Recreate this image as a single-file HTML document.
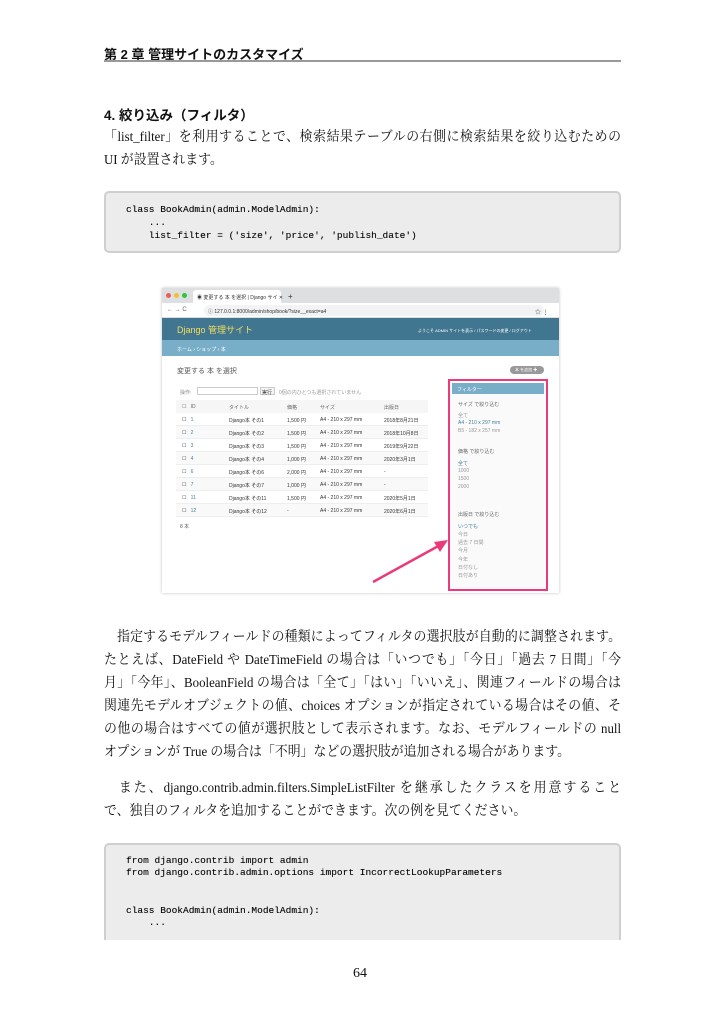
<!DOCTYPE html>
<html><head><meta charset="utf-8"><style>
*{margin:0;padding:0;box-sizing:border-box}
body{width:725px;height:1024px;background:#fff;position:relative;overflow:hidden;font-family:"Liberation Serif","Noto Serif CJK SC",serif;color:#111}
.a{position:absolute;white-space:nowrap}
.p{font-size:14px;left:104px;width:562px;transform:scaleX(0.92);transform-origin:0 0}
.j{text-align:justify;text-align-last:justify;white-space:normal}
.g{font-family:"Liberation Sans","Noto Sans CJK JP",sans-serif}
.code{position:absolute;left:104px;width:517px;background:#ececec;border:2px solid #cfcfcf;border-radius:5px}
.m{font-family:"Liberation Mono",monospace;font-size:9.5px;position:absolute;left:126px;white-space:pre;color:#000;-webkit-text-stroke:0.1px #000}
.s{font-family:"Liberation Sans","Noto Sans CJK JP",sans-serif;position:absolute;white-space:nowrap;font-size:5px;color:#333}
.row{position:absolute;left:176px;width:252px;height:13px;border-bottom:1px solid #eee}
</style></head><body>
<div class="a g" style="left:104px;top:44px;font-size:13px;font-weight:bold">第 2 章 管理サイトのカスタマイズ</div>
<div class="a" style="left:104px;top:60px;width:517px;height:2px;background:#999"></div>
<div class="a g" style="left:104px;top:104px;font-size:13.5px;font-weight:bold">4. 絞り込み（フィルタ）</div>
<div class="a p j" style="top:126px">「list_filter」を利用することで、検索結果テーブルの右側に検索結果を絞り込むための</div>
<div class="a p" style="top:149px">UI が設置されます。</div>
<div class="code" style="top:191px;height:62px"></div>
<div class="m" style="top:204px">class BookAdmin(admin.ModelAdmin):</div>
<div class="m" style="top:217px">    ...</div>
<div class="m" style="top:230px">    list_filter = ('size', 'price', 'publish_date')</div>

<!-- screenshot -->
<div class="a" style="left:162px;top:288px;width:397px;height:305px;background:#fff;box-shadow:0 0 3px rgba(0,0,0,.25)"></div>
<div class="a" style="left:162px;top:288px;width:397px;height:15px;background:#dedfe1"></div>
<div class="a" style="left:166px;top:293px;width:5px;height:5px;border-radius:50%;background:#ec5f57"></div>
<div class="a" style="left:174px;top:293px;width:5px;height:5px;border-radius:50%;background:#f5bd30"></div>
<div class="a" style="left:182px;top:293px;width:5px;height:5px;border-radius:50%;background:#2cc641"></div>
<div class="a" style="left:193px;top:290px;width:88px;height:13px;background:#fff;border-radius:3px 3px 0 0"></div>
<div class="s" style="left:197px;top:294px">◉ 変更する 本 を選択 | Django サイ ✕</div>
<div class="s" style="left:288px;top:292px;font-size:8px">+</div>
<div class="a" style="left:162px;top:303px;width:397px;height:15px;background:#fff;border-bottom:1px solid #ddd"></div>
<div class="a" style="left:204px;top:305px;width:340px;height:11px;background:#f1f3f4;border-radius:6px"></div>
<div class="s" style="left:167px;top:307px;font-size:6px;color:#666">← → C</div>
<div class="s" style="left:208px;top:308px">ⓘ 127.0.0.1:8000/admin/shop/book/?size__exact=a4</div>
<div class="s" style="left:535px;top:307px;font-size:6px">☆ ⋮</div>
<div class="a" style="left:162px;top:318px;width:397px;height:22px;background:#417690"></div>
<div class="s" style="left:177px;top:323px;font-size:9px;color:#f5dd5d">Django 管理サイト</div>
<div class="s" style="left:418px;top:328px;font-size:4px;color:#fff">ようこそ ADMIN サイトを表示 / パスワードの変更 / ログアウト</div>
<div class="a" style="left:162px;top:340px;width:397px;height:16px;background:#79aec8"></div>
<div class="s" style="left:177px;top:346px;color:#fff">ホーム › ショップ › 本</div>
<div class="s" style="left:177px;top:366px;font-size:7px;color:#555">変更する 本 を選択</div>
<div class="a" style="left:510px;top:366px;width:34px;height:8px;background:#999;border-radius:4px"></div>
<div class="s" style="left:515px;top:367px;font-size:4px;color:#fff">本 を追加 ✚</div>
<div class="s" style="left:180px;top:389px;color:#888">操作:</div>
<div class="a" style="left:197px;top:387px;width:61px;height:8px;border:1px solid #ccc;background:#fff"></div>
<div class="a" style="left:260px;top:387px;width:15px;height:8px;border:1px solid #ccc;background:#f4f4f4"></div>
<div class="s" style="left:262px;top:389px">実行</div>
<div class="s" style="left:279px;top:389px;color:#999">0個の内ひとつも選択されていません</div>
<div class="a" style="left:176px;top:400px;width:252px;height:13px;background:#f6f6f6"></div>
<div class="s" style="left:182px;top:404px;color:#666">☐ &nbsp;&nbsp;ID</div>
<div class="s" style="left:229px;top:404px;color:#666">タイトル</div>
<div class="s" style="left:287px;top:404px;color:#666">価格</div>
<div class="s" style="left:320px;top:404px;color:#666">サイズ</div>
<div class="s" style="left:384px;top:404px;color:#666">出版日</div>
<div class="row" style="top:413px"></div><div class="s" style="left:182px;top:417px">☐ &nbsp;&nbsp;<span style="color:#447e9b">1</span></div><div class="s" style="left:229px;top:417px">Django本 その1</div><div class="s" style="left:287px;top:417px">1,500 円</div><div class="s" style="left:320px;top:417px">A4 - 210 x 297 mm</div><div class="s" style="left:384px;top:417px">2018年8月21日</div>
<div class="row" style="top:426px;background:#f9f9f9"></div><div class="s" style="left:182px;top:430px">☐ &nbsp;&nbsp;<span style="color:#447e9b">2</span></div><div class="s" style="left:229px;top:430px">Django本 その2</div><div class="s" style="left:287px;top:430px">1,500 円</div><div class="s" style="left:320px;top:430px">A4 - 210 x 297 mm</div><div class="s" style="left:384px;top:430px">2018年10月8日</div>
<div class="row" style="top:439px"></div><div class="s" style="left:182px;top:443px">☐ &nbsp;&nbsp;<span style="color:#447e9b">3</span></div><div class="s" style="left:229px;top:443px">Django本 その3</div><div class="s" style="left:287px;top:443px">1,500 円</div><div class="s" style="left:320px;top:443px">A4 - 210 x 297 mm</div><div class="s" style="left:384px;top:443px">2019年9月22日</div>
<div class="row" style="top:452px;background:#f9f9f9"></div><div class="s" style="left:182px;top:456px">☐ &nbsp;&nbsp;<span style="color:#447e9b">4</span></div><div class="s" style="left:229px;top:456px">Django本 その4</div><div class="s" style="left:287px;top:456px">1,000 円</div><div class="s" style="left:320px;top:456px">A4 - 210 x 297 mm</div><div class="s" style="left:384px;top:456px">2020年3月1日</div>
<div class="row" style="top:465px"></div><div class="s" style="left:182px;top:469px">☐ &nbsp;&nbsp;<span style="color:#447e9b">6</span></div><div class="s" style="left:229px;top:469px">Django本 その6</div><div class="s" style="left:287px;top:469px">2,000 円</div><div class="s" style="left:320px;top:469px">A4 - 210 x 297 mm</div><div class="s" style="left:384px;top:469px">-</div>
<div class="row" style="top:478px;background:#f9f9f9"></div><div class="s" style="left:182px;top:482px">☐ &nbsp;&nbsp;<span style="color:#447e9b">7</span></div><div class="s" style="left:229px;top:482px">Django本 その7</div><div class="s" style="left:287px;top:482px">1,000 円</div><div class="s" style="left:320px;top:482px">A4 - 210 x 297 mm</div><div class="s" style="left:384px;top:482px">-</div>
<div class="row" style="top:491px"></div><div class="s" style="left:182px;top:495px">☐ &nbsp;&nbsp;<span style="color:#447e9b">11</span></div><div class="s" style="left:229px;top:495px">Django本 その11</div><div class="s" style="left:287px;top:495px">1,500 円</div><div class="s" style="left:320px;top:495px">A4 - 210 x 297 mm</div><div class="s" style="left:384px;top:495px">2020年5月1日</div>
<div class="row" style="top:504px;background:#f9f9f9"></div><div class="s" style="left:182px;top:508px">☐ &nbsp;&nbsp;<span style="color:#447e9b">12</span></div><div class="s" style="left:229px;top:508px">Django本 その12</div><div class="s" style="left:287px;top:508px">-</div><div class="s" style="left:320px;top:508px">A4 - 210 x 297 mm</div><div class="s" style="left:384px;top:508px">2020年6月1日</div>
<div class="s" style="left:180px;top:523px;color:#666">8 本</div>
<div class="a" style="left:448px;top:379px;width:100px;height:212px;border:2px solid #ea3a7a;background:#fafafa"></div>
<div class="a" style="left:452px;top:383px;width:92px;height:11px;background:#79aec8"></div>
<div class="s" style="left:457px;top:386px;color:#fff">フィルター</div>
<div class="s" style="left:458px;top:401px;color:#666">サイズ で絞り込む</div>
<div class="s" style="left:458px;top:412px;color:#999">全て</div>
<div class="s" style="left:458px;top:420px;color:#447e9b">A4 - 210 x 297 mm</div>
<div class="s" style="left:458px;top:428px;color:#999">B5 - 182 x 257 mm</div>
<div class="s" style="left:458px;top:448px;color:#666">価格 で絞り込む</div>
<div class="s" style="left:458px;top:460px;color:#447e9b">全て</div>
<div class="s" style="left:458px;top:468px;color:#999">1000</div>
<div class="s" style="left:458px;top:476px;color:#999">1500</div>
<div class="s" style="left:458px;top:484px;color:#999">2000</div>
<div class="s" style="left:458px;top:511px;color:#666">出版日 で絞り込む</div>
<div class="s" style="left:458px;top:523px;color:#447e9b">いつでも</div>
<div class="s" style="left:458px;top:531px;color:#999">今日</div>
<div class="s" style="left:458px;top:539px;color:#999">過去 7 日間</div>
<div class="s" style="left:458px;top:547px;color:#999">今月</div>
<div class="s" style="left:458px;top:556px;color:#999">今年</div>
<div class="s" style="left:458px;top:564px;color:#999">日付なし</div>
<div class="s" style="left:458px;top:572px;color:#999">日付あり</div>
<svg class="a" style="left:360px;top:530px" width="100" height="60"><line x1="13" y1="52" x2="82" y2="14" stroke="#ea3a7a" stroke-width="2.5"/><polygon points="88,10 74,12 80,22" fill="#ea3a7a"/></svg>

<div class="a p j" style="top:626px">　指定するモデルフィールドの種類によってフィルタの選択肢が自動的に調整されます。</div>
<div class="a p j" style="top:649px">たとえば、DateField や DateTimeField の場合は「いつでも」「今日」「過去 7 日間」「今</div>
<div class="a p j" style="top:672px">月」「今年」、BooleanField の場合は「全て」「はい」「いいえ」、関連フィールドの場合は</div>
<div class="a p j" style="top:695px">関連先モデルオブジェクトの値、choices オプションが指定されている場合はその値、そ</div>
<div class="a p j" style="top:718px">の他の場合はすべての値が選択肢として表示されます。なお、モデルフィールドの null</div>
<div class="a p" style="top:741px">オプションが True の場合は「不明」などの選択肢が追加される場合があります。</div>
<div class="a p j" style="top:777px">　また、django.contrib.admin.filters.SimpleListFilter を継承したクラスを用意すること</div>
<div class="a p" style="top:800px">で、独自のフィルタを追加することができます。次の例を見てください。</div>
<div class="code" style="top:843px;height:110px;border-radius:5px 5px 0 0"></div>
<div class="a" style="left:100px;top:940px;width:530px;height:20px;background:#fff"></div>
<div class="m" style="top:855px">from django.contrib import admin</div>
<div class="m" style="top:867px">from django.contrib.admin.options import IncorrectLookupParameters</div>
<div class="m" style="top:905px">class BookAdmin(admin.ModelAdmin):</div>
<div class="m" style="top:917px">    ...</div>
<div class="a" style="left:353px;top:966px;font-size:14px">64</div>
</body></html>
